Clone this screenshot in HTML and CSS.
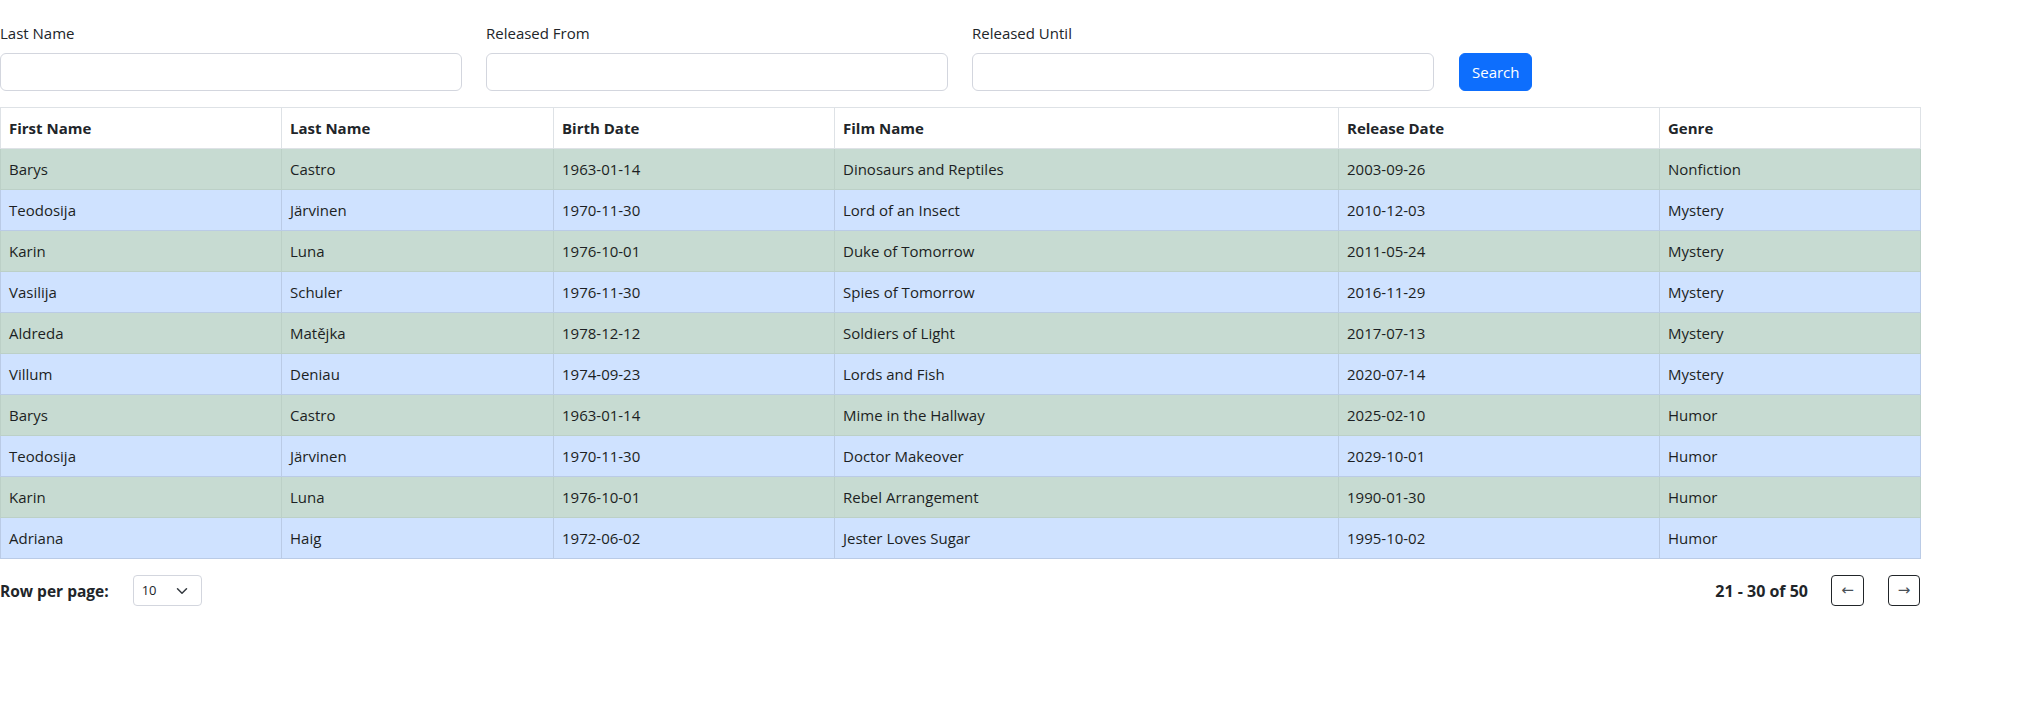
FILE: index.html
```html
<!DOCTYPE html>
<html lang="en">
<head>
<meta charset="utf-8">
<title>Films</title>
<link rel="stylesheet" href="styles.css">
</head>
<body>
<div class="page">
  <form class="filters">
    <div class="field">
      <label class="label">Last Name</label>
      <input class="control" type="text">
    </div>
    <div class="field">
      <label class="label">Released From</label>
      <input class="control" type="text">
    </div>
    <div class="field">
      <label class="label">Released Until</label>
      <input class="control" type="text">
    </div>
    <button class="btn-search" type="button">Search</button>
  </form>

  <table class="grid">
    <colgroup>
      <col class="c1"><col class="c2"><col class="c3"><col class="c4"><col class="c5"><col class="c6">
    </colgroup>
    <thead>
      <tr><th>First Name</th><th>Last Name</th><th>Birth Date</th><th>Film Name</th><th>Release Date</th><th>Genre</th></tr>
    </thead>
    <tbody>
      <tr class="green"><td>Barys</td><td>Castro</td><td>1963-01-14</td><td>Dinosaurs and Reptiles</td><td>2003-09-26</td><td>Nonfiction</td></tr>
      <tr class="blue"><td>Teodosija</td><td>Järvinen</td><td>1970-11-30</td><td>Lord of an Insect</td><td>2010-12-03</td><td>Mystery</td></tr>
      <tr class="green"><td>Karin</td><td>Luna</td><td>1976-10-01</td><td>Duke of Tomorrow</td><td>2011-05-24</td><td>Mystery</td></tr>
      <tr class="blue"><td>Vasilija</td><td>Schuler</td><td>1976-11-30</td><td>Spies of Tomorrow</td><td>2016-11-29</td><td>Mystery</td></tr>
      <tr class="green"><td>Aldreda</td><td>Matějka</td><td>1978-12-12</td><td>Soldiers of Light</td><td>2017-07-13</td><td>Mystery</td></tr>
      <tr class="blue"><td>Villum</td><td>Deniau</td><td>1974-09-23</td><td>Lords and Fish</td><td>2020-07-14</td><td>Mystery</td></tr>
      <tr class="green"><td>Barys</td><td>Castro</td><td>1963-01-14</td><td>Mime in the Hallway</td><td>2025-02-10</td><td>Humor</td></tr>
      <tr class="blue"><td>Teodosija</td><td>Järvinen</td><td>1970-11-30</td><td>Doctor Makeover</td><td>2029-10-01</td><td>Humor</td></tr>
      <tr class="green"><td>Karin</td><td>Luna</td><td>1976-10-01</td><td>Rebel Arrangement</td><td>1990-01-30</td><td>Humor</td></tr>
      <tr class="blue"><td>Adriana</td><td>Haig</td><td>1972-06-02</td><td>Jester Loves Sugar</td><td>1995-10-02</td><td>Humor</td></tr>
    </tbody>
  </table>

  <div class="footer">
    <div class="rows">
      <span class="rows-label">Row per page:</span>
      <div class="select">
        <span>10</span>
        <svg class="chev" viewBox="0 0 16 16" width="16" height="12"><path d="M2 5l6 6 6-6" fill="none" stroke="#343a40" stroke-width="2" stroke-linecap="round" stroke-linejoin="round"/></svg>
      </div>
    </div>
    <div class="pager">
      <span class="range">21 - 30 of 50</span>
      <button class="pg-btn" type="button">←</button>
      <button class="pg-btn" type="button">→</button>
    </div>
  </div>
</div>
</body>
</html>
```

FILE: styles.css
```css
* { box-sizing: border-box; }

body {
  margin: 0;
  background: #fff;
  color: #212529;
  font-family: "Open Sans", "Noto Sans", "Liberation Sans", sans-serif;
  font-size: 15px;
  line-height: 24px;
}

.page {
  width: 1920px;
  padding-top: 21px;
}

.filters {
  display: flex;
  align-items: flex-end;
  gap: 24px;
  margin: 0;
}

.field {
  width: 462px;
  display: flex;
  flex-direction: column;
}

.label {
  display: block;
  margin-bottom: 8px;
  font-size: 15px;
  line-height: 24px;
}

.control {
  display: block;
  width: 100%;
  height: 38px;
  padding: 6px 12px;
  font: inherit;
  border: 1px solid #d3d6de;
  border-radius: 6px;
  background: #fff;
  outline: none;
}

.btn-search {
  height: 38px;
  width: 73px;
  padding: 6px 12px;
  margin-left: 1px;
  font-family: inherit;
  font-size: 15px;
  line-height: 24px;
  color: #fff;
  background: #0d6efd;
  border: 1px solid #0d6efd;
  border-radius: 6px;
}

.grid {
  margin-top: 16px;
  width: 1920px;
  table-layout: fixed;
  border-collapse: collapse;
}

.c1 { width: 281px; }
.c2 { width: 272px; }
.c3 { width: 281px; }
.c4 { width: 504px; }
.c5 { width: 321px; }
.c6 { width: 261px; }

.grid th,
.grid td {
  padding: 8px;
  text-align: left;
  line-height: 24px;
  border: 1px solid #dee2e6;
  white-space: nowrap;
}

.grid th {
  font-weight: 700;
  background: #fff;
  color: #212529;
}

.grid td { color: #1c1f23; }

.green td {
  background: #c7dbd2;
  border-color: #bcd0c7;
}

.blue td {
  background: #cfe2ff;
  border-color: #bacbe6;
}

.footer {
  margin-top: 16px;
  display: flex;
  justify-content: space-between;
  align-items: center;
  height: 31px;
}

.rows {
  display: flex;
  align-items: center;
  gap: 24px;
}

.rows-label {
  font-weight: 700;
  font-size: 15.5px;
}

.select {
  width: 69px;
  height: 31px;
  border: 1px solid #d3d6de;
  border-radius: 4px;
  display: flex;
  align-items: center;
  justify-content: space-between;
  padding: 0 11px 0 8px;
  font-size: 13px;
  line-height: 21px;
}

.chev { width: 16px; height: 12px; }

.pager {
  display: flex;
  align-items: center;
  gap: 23px;
}

.range {
  font-weight: 700;
  font-size: 16px;
}

.pg-btn {
  width: 33px;
  height: 31px;
  padding: 0;
  border: 1px solid #212529;
  border-radius: 4px;
  background: #fff;
  color: #495057;
  font-family: "DejaVu Sans", sans-serif;
  font-size: 15px;
  line-height: 29px;
}

.pg-btn + .pg-btn { width: 32px; margin-left: 1px; }
```
